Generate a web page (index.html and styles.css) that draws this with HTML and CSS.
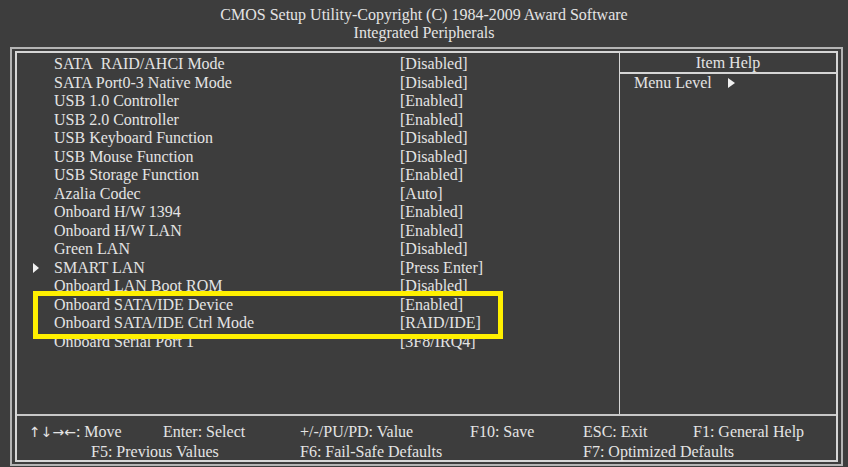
FILE: index.html
```html
<!DOCTYPE html>
<html lang="en">
<head>
  <meta charset="UTF-8" />
  <title>Integrated Peripherals</title>
  <link rel="stylesheet" href="styles.css">
</head>
<body>
  <div class="title">
    <div>CMOS Setup Utility-Copyright (C) 1984-2009 Award Software</div>
    <div>Integrated Peripherals</div>
  </div>

  <div class="frame">
    <div class="inner">
      <div class="main">
        <div class="items">
          <div class="row"><span>SATA&nbsp; RAID/AHCI Mode</span><span>[Disabled]</span></div>
          <div class="row"><span>SATA Port0-3 Native Mode</span><span>[Disabled]</span></div>
          <div class="row"><span>USB 1.0 Controller</span><span>[Enabled]</span></div>
          <div class="row"><span>USB 2.0 Controller</span><span>[Enabled]</span></div>
          <div class="row"><span>USB Keyboard Function</span><span>[Disabled]</span></div>
          <div class="row"><span>USB Mouse Function</span><span>[Disabled]</span></div>
          <div class="row"><span>USB Storage Function</span><span>[Enabled]</span></div>
          <div class="row"><span>Azalia Codec</span><span>[Auto]</span></div>
          <div class="row"><span>Onboard H/W 1394</span><span>[Enabled]</span></div>
          <div class="row"><span>Onboard H/W LAN</span><span>[Enabled]</span></div>
          <div class="row"><span>Green LAN</span><span>[Disabled]</span></div>
          <div class="row sub"><span>SMART LAN</span><span>[Press Enter]</span></div>
          <div class="row"><span>Onboard LAN Boot ROM</span><span>[Disabled]</span></div>
          <div class="row"><span>Onboard SATA/IDE Device</span><span>[Enabled]</span></div>
          <div class="row"><span>Onboard SATA/IDE Ctrl Mode</span><span>[RAID/IDE]</span></div>
          <div class="row"><span>Onboard Serial Port 1</span><span>[3F8/IRQ4]</span></div>
          <div class="mark"></div>
        </div>
        <div class="help">
          <div class="help-title">Item Help</div>
          <div class="level">Menu Level <span class="tri"></span></div>
        </div>
      </div>
      <div class="keys">
        <span><span class="arrows">&#8593;&#8595;&#8594;&#8592;</span>: Move</span>
        <span>Enter: Select</span>
        <span>+/-/PU/PD: Value</span>
        <span>F10: Save</span>
        <span>ESC: Exit</span>
        <span>F1: General Help</span>
        <span class="k-f5">F5: Previous Values</span>
        <span class="k-f6">F6: Fail-Safe Defaults</span>
        <span class="k-f7">F7: Optimized Defaults</span>
      </div>
    </div>
  </div>
</body>
</html>
```

FILE: styles.css
```css
body {
  margin: 0;
  background: #3d3d3d;
  color: #e4e4e4;
  font-family: "Liberation Serif", "Times New Roman", serif;
  font-size: 16px;
  width: 848px;
  height: 467px;
  overflow: hidden;
}
.title {
  height: 47px;
  padding-top: 6px;
  box-sizing: border-box;
  text-align: center;
  line-height: 18px;
}
.frame {
  margin-left: 10px;
  width: 833px;
  height: 419px;
  box-sizing: border-box;
  border: 2px solid #b4b4b4;
  padding: 2px 3px;
}
.inner {
  height: 100%;
  box-sizing: border-box;
  border: 2px solid #d6d6d6;
  display: flex;
  flex-direction: column;
}
.main {
  flex: 1;
  display: grid;
  grid-template-columns: 602px 1fr;
  border-bottom: 2px solid #c8c8c8;
}
.items {
  position: relative;
  padding-top: 2px;
}
.row {
  display: grid;
  grid-template-columns: 346px auto;
  padding-left: 37px;
  line-height: 18.5px;
  position: relative;
}
.sub::before {
  content: "";
  position: absolute;
  left: 16px;
  top: 4px;
  border-left: 6px solid #f0f0f0;
  border-top: 5px solid transparent;
  border-bottom: 5px solid transparent;
}
.mark {
  position: absolute;
  left: 16px;
  top: 238px;
  width: 470px;
  height: 48px;
  box-sizing: border-box;
  border: 5px solid #fff000;
}
.help {
  border-left: 1px solid #d6d6d6;
}
.help-title {
  text-align: center;
  line-height: 18px;
  padding-top: 1px;
  border-bottom: 2px solid #d6d6d6;
}
.level {
  padding-left: 14px;
  line-height: 18px;
}
.tri {
  display: inline-block;
  margin-left: 12px;
  border-left: 7px solid #f0f0f0;
  border-top: 5px solid transparent;
  border-bottom: 5px solid transparent;
  vertical-align: 0;
}
.keys {
  height: 44px;
  padding: 6px 0 0 12px;
  box-sizing: border-box;
  display: grid;
  grid-template-columns: 134px 137px 170px 113px 110px 1fr;
  line-height: 19px;
  white-space: nowrap;
}
.arrows {
  font-family: "DejaVu Sans", sans-serif;
  font-size: 14px;
}
.k-f5 {
  grid-column: 1 / span 2;
  padding-left: 62px;
}
.k-f6 {
  grid-column: 3 / span 2;
}
.k-f7 {
  grid-column: 5 / span 2;
}
```
